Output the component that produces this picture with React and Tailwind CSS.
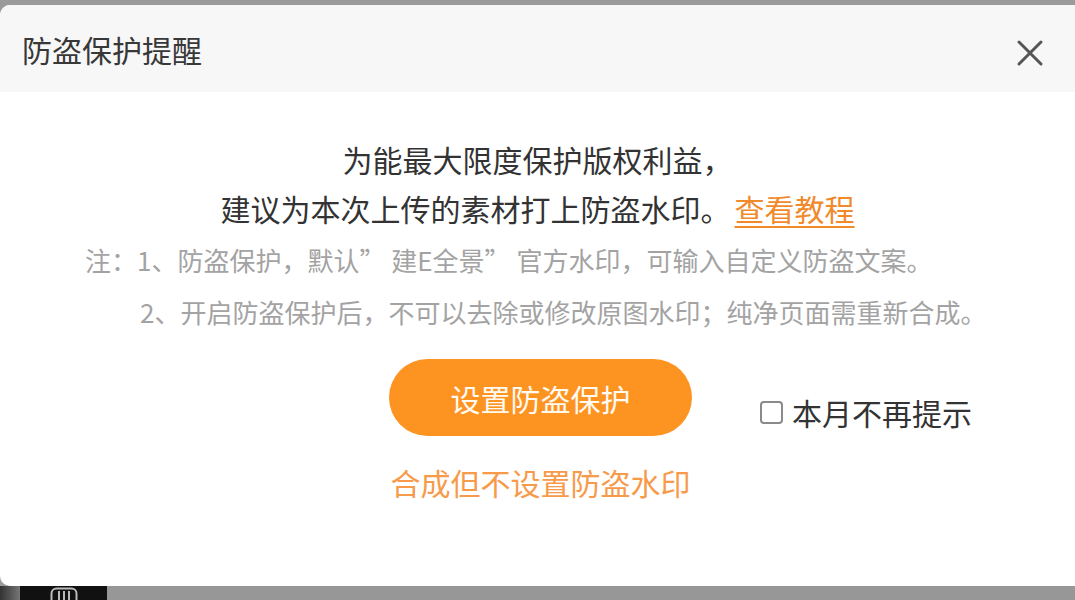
import React from "react";

export default function App() {
  return (
    <div className="w-[1075px] h-[600px] bg-[#9b9b9b] pt-[5px] flex flex-col overflow-hidden font-['Noto_Sans_CJK_SC','Noto_Sans',sans-serif]">
      <div className="h-[581px] shrink-0 bg-white rounded-l-[10px] flex flex-col overflow-hidden">
        <div className="h-[87px] shrink-0 bg-[#f7f7f7] flex items-center justify-between pl-[22px] pr-[31px]">
          <div className="text-[30px] leading-none text-[#383838]">防盗保护提醒</div>
          <svg width="28" height="28" viewBox="0 0 28 28" className="mt-[8px]">
            <path d="M3 3 L25 25 M25 3 L3 25" stroke="#555" strokeWidth="3" strokeLinecap="round" />
          </svg>
        </div>
        <div className="flex flex-col pt-[42px]">
          <p className="text-center text-[30px] leading-[50px] text-[#333]">为能最大限度保护版权利益，</p>
          <p className="text-center text-[30px] leading-[49px] text-[#333]">
            建议为本次上传的素材打上防盗水印。
            <span className="ml-[4px] text-[#f18a2b] underline decoration-[2px] underline-offset-[5px]">查看教程</span>
          </p>
          <div className="mt-[1px] pl-[85px] text-[26px] leading-[52px] text-[#a3a3a3]">
            <p>注：1、防盗保护，默认” 建E全景” 官方水印，可输入自定义防盗文案。</p>
            <p className="pl-[55px]">2、开启防盗保护后，不可以去除或修改原图水印；纯净页面需重新合成。</p>
          </div>
          <div className="mt-[21px] grid grid-cols-[1fr_auto_1fr]">
            <div></div>
            <div className="pl-[6px]">
              <button className="w-[303px] h-[77px] rounded-full bg-[#fd9422] text-[30px] leading-none text-[#fffaf2]">
                设置防盗保护
              </button>
            </div>
            <label className="self-start mt-[38px] pl-[68px] flex items-center gap-[9px] text-[30px] leading-none text-[#333]">
              <span className="w-[23px] h-[23px] rounded-[4px] border-2 border-[#8a8a8a] bg-white shrink-0"></span>
              本月不再提示
            </label>
          </div>
          <p className="mt-[31px] pl-[6px] text-center text-[30px] leading-[30px] text-[#f79a4a]">合成但不设置防盗水印</p>
        </div>
      </div>
      <div className="flex-1 flex bg-[#979797]">
        <div className="w-[20px] bg-gradient-to-r from-[#333] to-[#777]"></div>
        <div className="w-[87px] bg-[#111] flex items-start pl-[30px] pt-[1px]">
          <svg width="28" height="16" viewBox="0 0 28 16">
            <rect x="1.5" y="1.5" width="25" height="20" rx="5" fill="none" stroke="#bbb" strokeWidth="2" />
            <path d="M9 4 V16 M14 4 V16 M19 4 V16" stroke="#bbb" strokeWidth="2" />
          </svg>
        </div>
      </div>
    </div>
  );
}
